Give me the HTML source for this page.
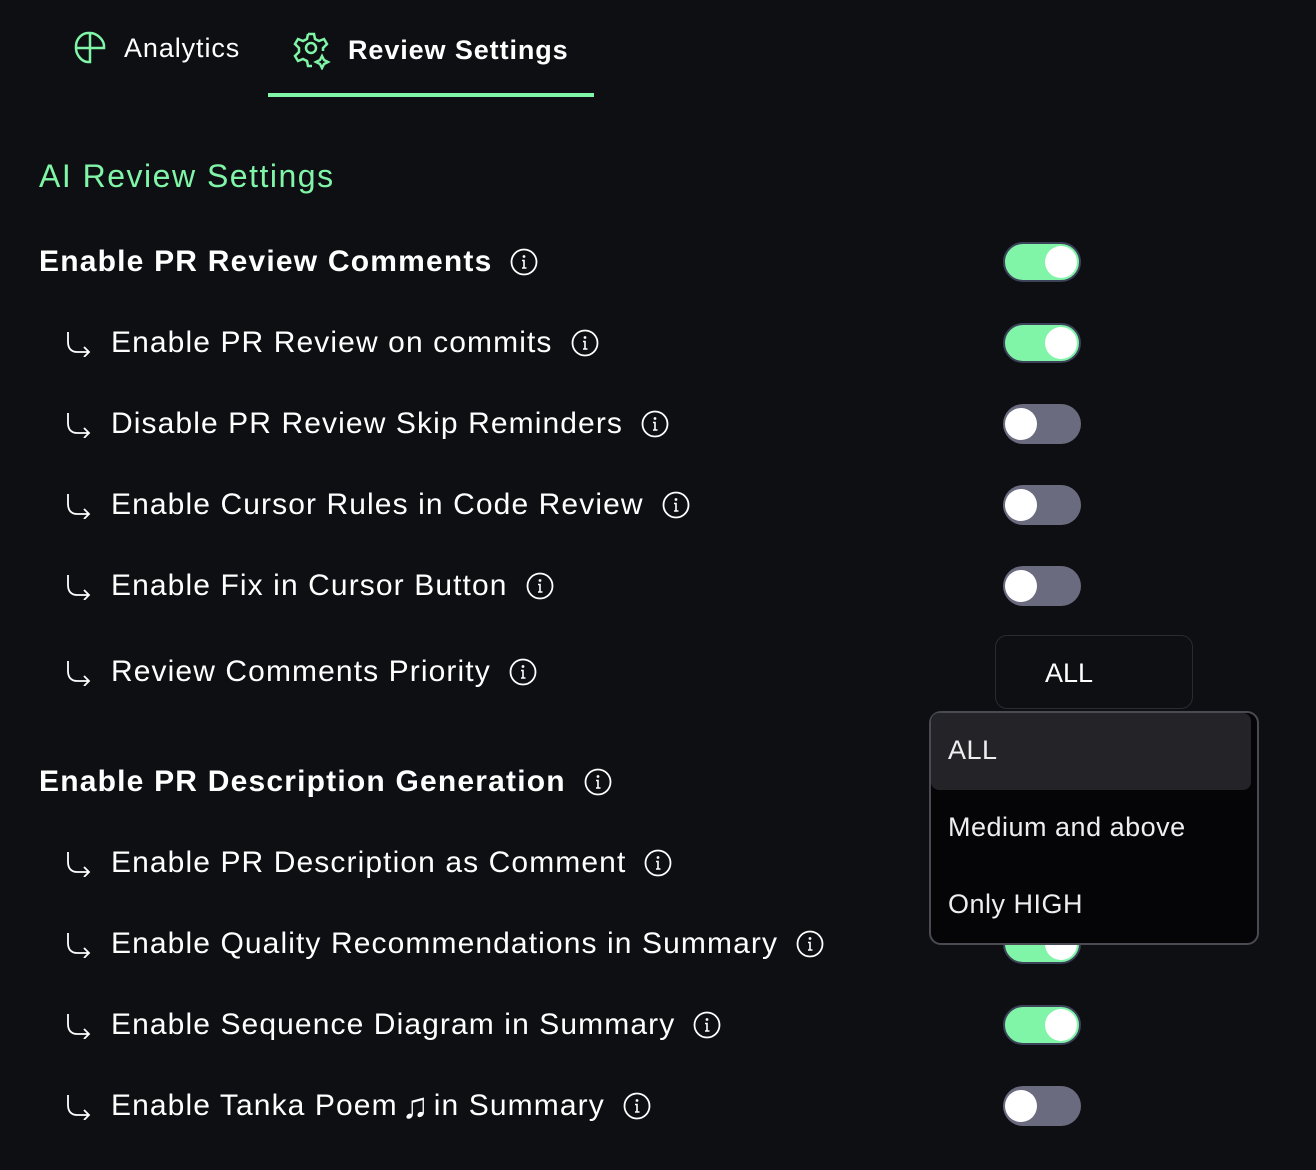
<!DOCTYPE html>
<html><head><meta charset="utf-8"><style>
*{margin:0;padding:0;box-sizing:border-box}
body{width:1316px;height:1170px;background:#0e0f13;color:#fff;font-family:"Liberation Sans",sans-serif;position:relative;overflow:hidden}
.tab{position:absolute;top:30px;display:flex;align-items:center;gap:16px;font-size:27px;letter-spacing:0.9px}
.ul{position:absolute;left:268px;top:93px;width:326px;height:4px;background:#80f5a8}
h2{position:absolute;left:39px;top:158px;font-size:32px;font-weight:normal;color:#80f5a8;letter-spacing:1.5px}
.row{position:absolute;display:flex;align-items:center;height:40px;font-size:30px;white-space:nowrap;letter-spacing:1.1px}
.row.h{left:39px;font-weight:bold;font-size:30px;letter-spacing:1.2px}
.row.s{left:64px}
.arr{width:28px;height:28px;margin-right:19px}
.i{width:28px;height:28px;margin-left:18px;flex:none}
.tg{position:absolute;left:1003px;width:78px;height:40px;border-radius:20px}
.tg.on{background:#80f5a8;border:2px solid #3c4258}
.tg.off{background:#6b6b80}
.tg::after{content:"";position:absolute;top:4px;width:32px;height:32px;border-radius:50%;background:#fff}
.tg.on::after{right:2px;top:2px}
.tg.off::after{left:2px}
.sel{position:absolute;left:995px;top:635px;width:198px;height:74px;border:1px solid #2a2b31;border-radius:12px;font-size:27px;padding:22px 0 0 49px}
.menu{position:absolute;left:929px;top:711px;width:330px;height:234px;background:#050507;border:2px solid #4a4b52;border-radius:12px;font-size:27px;letter-spacing:0.5px}
.it{position:absolute;left:0;width:320px;height:77px;padding:22px 0 0 17px;color:#eee}
.it.hl{background:#242328;border-radius:8px;top:0}
</style></head><body>
<div class="tab" style="left:72px"><svg width="36" height="36" viewBox="0 0 36 36" fill="none" stroke="#80f5a8" stroke-width="2.5"><path d="M18 3c7 0 14 7 14 13v2H4v-2C4 9 10 3 16 3zM4 18c0 7 6 14 12 14h2V3"/></svg><span>Analytics</span></div>
<div class="tab" style="left:292px;font-weight:bold"><svg width="40" height="40" viewBox="0 0 40 40" fill="none" stroke="#80f5a8" stroke-width="2.5"><path d="M16 4h6l1 5 4 2 5-2 3 5-4 4v3M16 4l-1 5-4 2-5-2-3 5 4 4v4l-4 4 3 5 5-2 4 2 1 5h4"/><circle cx="19" cy="18" r="5"/><path d="M30 26l2 4 4 2-4 2-2 4-2-4-4-2 4-2z"/></svg><span>Review Settings</span></div>
<div class="ul"></div>
<h2>AI Review Settings</h2>
<svg width="0" height="0" style="position:absolute"><defs>
<symbol id="info" viewBox="0 0 28 28"><circle cx="14" cy="14" r="12.5" fill="none" stroke="#fff" stroke-width="1.8"/><circle cx="14" cy="8.5" r="1.4" fill="#fff"/><path d="M12 12.5h2v7.5M12 20h4.5" stroke="#fff" stroke-width="1.6" fill="none"/></symbol>
<symbol id="arr" viewBox="0 0 28 28"><path d="M4 3v10c0 6 3 10 9 10h11M20 18l5 5-5 5" fill="none" stroke="#fff" stroke-width="1.8"/></symbol>
</defs></svg>

<div class="row h" style="top:242px">Enable PR Review Comments<svg class="i"><use href="#info"/></svg></div>
<div class="row s" style="top:323px"><svg class="arr"><use href="#arr"/></svg>Enable PR Review on commits<svg class="i"><use href="#info"/></svg></div>
<div class="row s" style="top:404px"><svg class="arr"><use href="#arr"/></svg>Disable PR Review Skip Reminders<svg class="i"><use href="#info"/></svg></div>
<div class="row s" style="top:485px"><svg class="arr"><use href="#arr"/></svg>Enable Cursor Rules in Code Review<svg class="i"><use href="#info"/></svg></div>
<div class="row s" style="top:566px"><svg class="arr"><use href="#arr"/></svg>Enable Fix in Cursor Button<svg class="i"><use href="#info"/></svg></div>
<div class="row s" style="top:652px"><svg class="arr"><use href="#arr"/></svg>Review Comments Priority<svg class="i"><use href="#info"/></svg></div>
<div class="row h" style="top:762px">Enable PR Description Generation<svg class="i"><use href="#info"/></svg></div>
<div class="row s" style="top:843px"><svg class="arr"><use href="#arr"/></svg>Enable PR Description as Comment<svg class="i"><use href="#info"/></svg></div>
<div class="row s" style="top:924px"><svg class="arr"><use href="#arr"/></svg>Enable Quality Recommendations in Summary<svg class="i"><use href="#info"/></svg></div>
<div class="row s" style="top:1005px"><svg class="arr"><use href="#arr"/></svg>Enable Sequence Diagram in Summary<svg class="i"><use href="#info"/></svg></div>
<div class="row s" style="top:1086px"><svg class="arr"><use href="#arr"/></svg>Enable Tanka Poem <span style="font-size:36px;margin:0 4px">♫</span> in Summary<svg class="i"><use href="#info"/></svg></div>

<div class="tg on" style="top:242px"></div>
<div class="tg on" style="top:323px"></div>
<div class="tg off" style="top:404px"></div>
<div class="tg off" style="top:485px"></div>
<div class="tg off" style="top:566px"></div>
<div class="tg on" style="top:924px"></div>
<div class="tg on" style="top:1005px"></div>
<div class="tg off" style="top:1086px"></div>

<div class="sel">ALL</div>
<div class="menu">
<div class="it hl">ALL</div>
<div class="it" style="top:77px">Medium and above</div>
<div class="it" style="top:154px">Only HIGH</div>
</div>
</body></html>
